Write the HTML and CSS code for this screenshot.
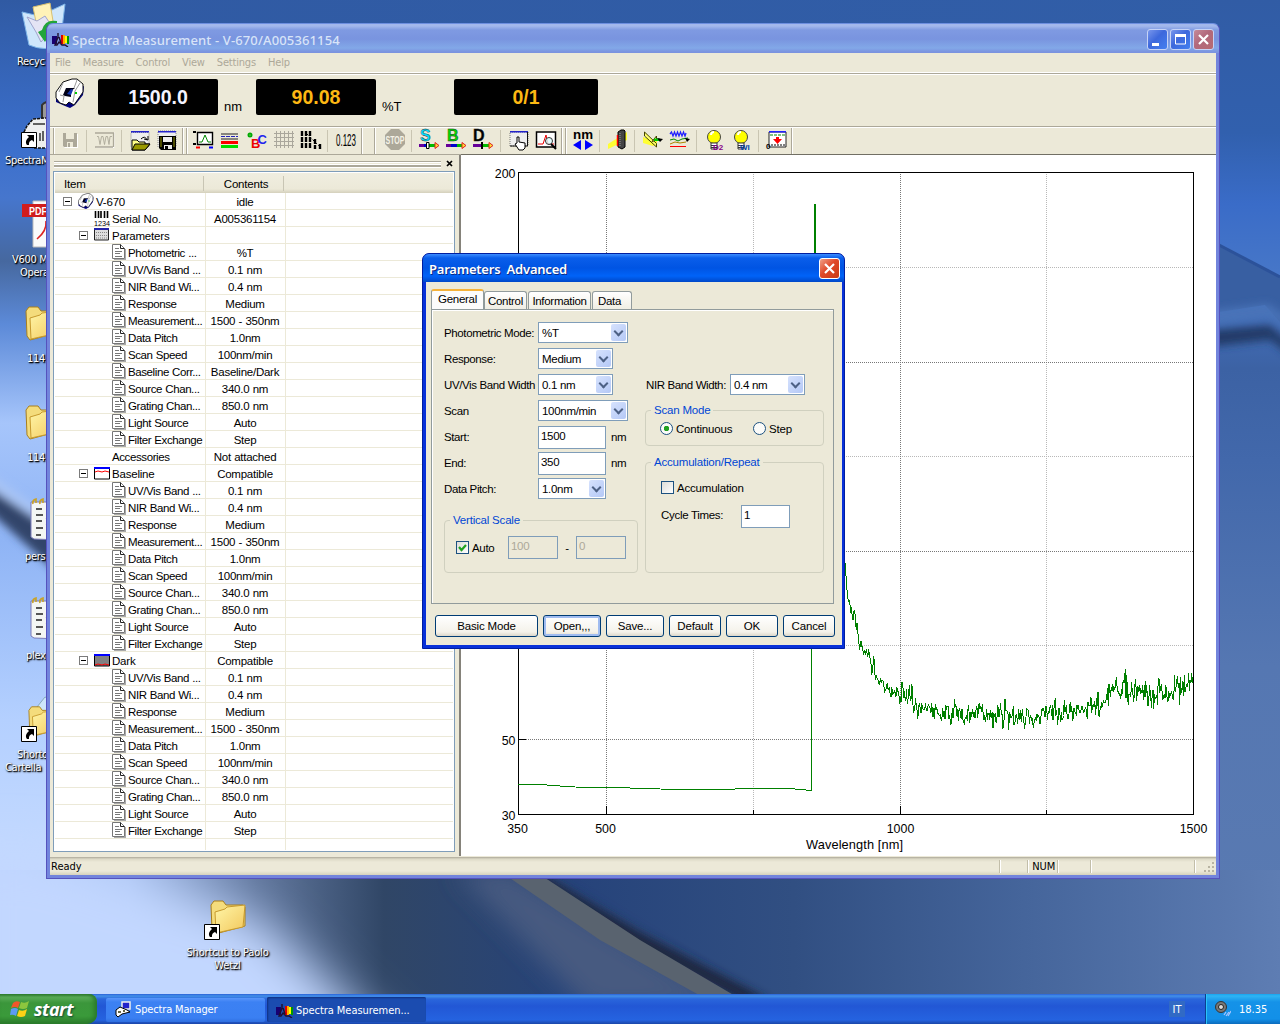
FILE: index.html
```html
<!DOCTYPE html>
<html lang="en">
<head>
<meta charset="utf-8">
<title>Spectra Measurement</title>
<link rel="stylesheet" href="styles.css">
</head>
<body>
<svg width="0" height="0" class="defs">
  <defs>
    <linearGradient id="fold" x1="0" y1="0" x2="1" y2="1"><stop offset="0" stop-color="#fff6a8"/><stop offset="1" stop-color="#f2c75c"/></linearGradient>
    <symbol id="folder" viewBox="0 0 38 36"><path d="M1 5 4 1h9l3 4h17l2 2v19L5 34 2 30Z" fill="#f4dc7c" stroke="#a87f1c"/><path d="M5 12 15 9l2-2 18-2-2 22L6 33Z" fill="url(#fold)" stroke="#c79a2e"/></symbol>
    <symbol id="arrow" viewBox="0 0 16 16"><path d="M.5.5h15v15H.5z" fill="#fff" stroke="#000"/><path d="M6 3h7v7l-2-2c-3 1-3 3-3 5H6c-2-3-1-5 2-8Z" fill="#000"/></symbol>
    <symbol id="note" viewBox="0 0 32 44"><path d="M1 4h30v38L4 41 1 39Z" fill="#f4f6f4" stroke="#7a7ab8"/><path d="M6 11h6M6 17h7M6 23h6M6 30h7M6 37h5M16 11h14M16 20l14 3M16 27l14-2M16 35h14" stroke="#222" stroke-width="1.6"/><path d="M3 6q-1-4 3-5v4M10 6q-1-4 3-5v4M17 6q-1-4 3-5v4M24 6q-1-4 3-5v4" fill="none" stroke="#c9a227" stroke-width="1.6"/></symbol>
    <symbol id="instr" viewBox="0 0 30 30"><path d="M1 18v6l9 4 5 2 5-3 8-10 1-9-9 4Z" fill="#00007c"/><path d="M1 14 8 4l9-3h5l6 5v8l-9 13-5-3-3 3-6-2-4-5Z" fill="#fff" stroke="#111"/><path d="M11 10h9l-4 3v6l-6-1-2-1Z" fill="#000018"/><path d="m12 16 4-5 2 1-2 5Z" fill="#1436b0"/><path d="M8 5 4 14M22 2l-3 8M25 5l-5 8-2 11M5 17l4 1-1 6" fill="none" stroke="#999"/><path d="M20 14h2v2h-2z" fill="#0c0"/></symbol>
    <symbol id="spec" viewBox="0 0 17 14"><path d="M0 3h5v8H0z" fill="#180070"/><path d="M9 2h2v9H9z" fill="#d00"/><path d="M11 2h2v9h-2z" fill="#fa0"/><path d="M13 3h2v7h-2z" fill="#ff0"/><path d="M15 3h2v8h-2z" fill="#090"/><path d="M6 0v4l-3 8h2l2-3 3 3h3l3 2M7 4l2 6" fill="none" stroke="#201030" stroke-width="1.4"/></symbol>
    <symbol id="doc" viewBox="0 0 14 16"><path d="M2 15h11V5h1v11H2z" fill="#aaa"/><path d="M.5.5h8l4 4v10H.5z" fill="#fff" stroke="#777"/><path d="M8.500.5v4h4" fill="none" stroke="#222"/><path d="M3 4.500h4M3 7.500h7M3 9.500h5M3 12.500h7" stroke="#777"/></symbol>
    <symbol id="bulb" viewBox="0 0 22 22"><circle cx="10" cy="8" r="6.500" fill="#ff0" stroke="#444"/><path d="M7 6q0-3 3-3" fill="none" stroke="#fff" stroke-width="2"/><path d="M7 14h6v6H7z" fill="#fff" stroke="#333"/><path d="M7 16.500h6M7 18.500h6" stroke="#333"/></symbol>
  </defs>
</svg>

<main class="desktop">
  <svg class="wallpaper" viewBox="0 0 1280 1024" preserveAspectRatio="none">
    <defs>
      <linearGradient id="wl" x1="0" y1="0" x2="0" y2="1"><stop offset="0" stop-color="#305aa3"/><stop offset=".16" stop-color="#3b6fcc"/><stop offset=".22" stop-color="#4676cd"/><stop offset=".29" stop-color="#46689f"/><stop offset=".36" stop-color="#5c8ad8"/><stop offset=".47" stop-color="#a6c5fb"/><stop offset=".6" stop-color="#8fb4f5"/><stop offset=".8" stop-color="#b4d0ff"/><stop offset="1" stop-color="#c8dcff"/></linearGradient>
      <linearGradient id="wt" x1="0" x2="1"><stop offset="0" stop-color="#305aa3"/><stop offset="1" stop-color="#315ea8"/></linearGradient>
      <linearGradient id="wr" x1="0" y1="0" x2="0" y2="1"><stop offset="0" stop-color="#315ca5"/><stop offset=".13" stop-color="#3160ae"/><stop offset=".2" stop-color="#3a6cc8"/><stop offset=".27" stop-color="#4777c8"/><stop offset=".36" stop-color="#3c62a4"/><stop offset=".45" stop-color="#4268ab"/><stop offset=".65" stop-color="#5577b2"/><stop offset="1" stop-color="#5b7bb1"/></linearGradient>
      <linearGradient id="wb" x1="0" x2="1"><stop offset="0" stop-color="#b9d2ff"/><stop offset=".1" stop-color="#a9c2f0"/><stop offset=".2" stop-color="#63799f"/><stop offset=".3" stop-color="#304666"/><stop offset=".45" stop-color="#26437a"/><stop offset=".62" stop-color="#314f82"/><stop offset=".8" stop-color="#45659b"/><stop offset="1" stop-color="#5e7db3"/></linearGradient>
      <filter id="b4" x="-20%" y="-20%" width="140%" height="140%"><feGaussianBlur stdDeviation="4"/></filter>
      <filter id="b12" x="-30%" y="-30%" width="160%" height="160%"><feGaussianBlur stdDeviation="12"/></filter>
      <filter id="b20" x="-50%" y="-50%" width="200%" height="200%"><feGaussianBlur stdDeviation="24"/></filter>
    </defs>
    <rect width="1280" height="1024" fill="url(#wt)"/>
    <rect width="60" height="900" fill="url(#wl)"/>
    <rect x="1200" width="80" height="1024" fill="url(#wr)"/>
    <path d="M1200 235 1280 277v45l-15-17-65 10Z" fill="#385fa2"/><path d="M1200 235 1280 277" stroke="#2c529a" stroke-width="3"/>
    <g filter="url(#b4)"><path d="M1200 312 1268 304l22 15v10l-22-12-68 8Z" fill="#4a73b8"/><path d="M1200 331l70-6 20 18v12l-20-15-70 8Z" fill="#223a68"/><path d="M-10 480 60 535v40L-10 512Z" fill="#31456b"/><path d="M-10 474 60 523v12L-10 488Z" fill="#a9c5f5"/></g>
    <rect y="870" width="1280" height="154" fill="url(#wb)"/>
    <path d="M-40 850H40L260 920 410 1060H-40Z" fill="#c2d7ff" filter="url(#b20)"/>
    <path d="M455 870 H510 L740 1010 H590Z" fill="#465a80" filter="url(#b12)"/>
    <g filter="url(#b4)"><path d="M536 870 640 932 770 1000H740L630 945 520 870Z" fill="#1c2740"/></g>
    <path d="M498 870H533L640 940 742 1000H708L600 940Z" fill="#59636f"/>
  </svg>

  <div class="shortcut" style="left:17px;top:2px"><svg width="50" height="48" viewBox="0 0 50 48"><path d="M5 10 22 14 48 2 43 43Q28 50 12 43Z" fill="#cfe6fb" stroke="#7fb6e8"/><path d="m16 5 17-4 3 18-16 6Z" fill="#fff2b8" stroke="#d8c070"/><path d="m10 15 10 4 8-5 8 12-12 14-5-10Z" fill="#e4e4f4" stroke="#9fa4cc"/><path d="M25 28q3-11 15-9v8q-8-4-9 3h3l-6 10-7-10Z" fill="#22a53a"/></svg><span class="t1">Recyc</span></div>
  <div class="shortcut" style="left:5px;top:100px"><svg width="60" height="50" viewBox="0 0 60 50"><path d="M37 20V5q3-4 12-4v18" fill="#999" stroke="#333" stroke-width="2"/><path d="M19 32l3-6 6-7 12-1h15v30H28Z" fill="#eee" stroke="#111" stroke-dasharray="3 1" stroke-width="1.500"/><path d="M35 33v8M38 31v10M28 24h12" stroke="#333" stroke-width="1.500"/><use href="#arrow" x="16" y="32" width="16" height="16"/></svg><span class="t2">SpectraM</span></div>
  <div class="shortcut" style="left:12px;top:200px"><svg width="50" height="49" viewBox="0 0 50 49"><path d="M21 1h30v46H21z" fill="#fafafa" stroke="#bbb"/><path d="M10 4h40v13H10z" fill="#d01c1c"/><text x="17" y="14.500" class="pdf" textLength="18" lengthAdjust="spacingAndGlyphs">PDF</text><path d="M25 39q10-8 9-18l4 14" fill="none" stroke="#d22" stroke-width="1.600"/></svg><span>V600 M</span><span class="ind8">Opera</span></div>
  <div class="shortcut" style="left:25px;top:305px"><svg width="38" height="38"><use href="#folder" width="38" height="38"/></svg><span class="t3">114.</span></div>
  <div class="shortcut" style="left:25px;top:404px"><svg width="38" height="38"><use href="#folder" width="38" height="38"/></svg><span class="t3">114.</span></div>
  <div class="shortcut" style="left:25px;top:498px"><svg width="42" height="44" viewBox="-5 0 42 44"><use href="#note" width="32" height="44"/></svg><span class="t4">pers</span></div>
  <div class="shortcut" style="left:26px;top:597px"><svg width="42" height="44" viewBox="-4 0 42 44"><use href="#note" width="32" height="44"/></svg><span class="t4">plex</span></div>
  <div class="shortcut" style="left:5px;top:695px"><svg width="60" height="50" viewBox="0 0 60 50"><path d="m32 12 8-10 14 6v18Z" fill="#cde6fb" stroke="#8ab"/><use href="#folder" x="23" y="10" width="34" height="34"/><use href="#arrow" x="16" y="31" width="16" height="16"/></svg><span class="t5">Shortc</span><span>Cartella</span></div>
  <div class="shortcut centered" style="left:182px;top:898px"><svg width="50" height="44" viewBox="0 0 50 44"><use href="#folder" x="7" y="2" width="38" height="36"/><use href="#arrow" x="1" y="26" width="16" height="16"/></svg><span>Shortcut to Paolo</span><span>Wetzl</span></div>

  <section class="window main-window">
    <header class="titlebar">
      <svg width="17" height="14"><use href="#spec" width="17" height="14"/></svg>
      <h1>Spectra Measurement - V-670/A005361154</h1>
      <div class="wbtns"><i class="wb"><svg width="19" height="19"><path d="M4 13h7v3H4z" fill="#fff"/></svg></i><i class="wb"><svg width="19" height="19"><path d="M4.500 5h10v9h-10z" fill="none" stroke="#fff"/><path d="M4 4h11v3H4z" fill="#fff"/></svg></i><i class="wb red"><svg width="19" height="19"><path d="m5 5 9 9m0-9-9 9" stroke="#fff" stroke-width="2.200"/></svg></i></div>
    </header>
    <div class="client">
      <nav class="menu"><span>File</span><span>Measure</span><span>Control</span><span>View</span><span>Settings</span><span>Help</span></nav>
      <div class="readouts">
        <svg class="inst" width="30" height="30"><use href="#instr" width="30" height="30"/></svg>
        <output class="lcd white">1500.0</output><span class="unit">nm</span>
        <output class="lcd">90.08</output><span class="unit pct">%T</span>
        <output class="lcd wide">0/1</output>
      </div>
      <div class="toolbar">
        <div class="tg ga">
          <svg viewBox="0 0 22 22"><path d="M5 5h14v14H6l-2-2V4z" fill="#fff"/><path d="M4 4h14v14H5l-1-1z" fill="#aca899"/><path d="M7 4h8v6H7zM8 13h6v5H8z" fill="#ece9d8"/><path d="M9 14h2v4H9z" fill="#aca899"/></svg><b></b>
          <svg viewBox="0 0 22 22"><path d="M2 18.500h18v-15" fill="none" stroke="#fff"/><path d="M1 4h19M19.500 4v14M1 18h18" fill="none" stroke="#aca899" stroke-width="1.300"/><path d="M3 7.500h1.500l1.500 8 1.500-8H9l1.500 8 1.500-8h1.500l1.500 8 1-8h2" fill="none" stroke="#aca899" stroke-width=".9"/></svg><b></b>
          <svg viewBox="0 0 22 22"><path d="M2 3.500h18v14H2z" fill="#eee" stroke="#888" stroke-dasharray="1 1"/><path d="M2 2h18v1.500H2z" fill="#22c"/><path d="M3 11h5l2 2h6v2h5l-5 6H3z" fill="#ff8" stroke="#000"/><path d="m6 15h15l-5 6H3Z" fill="#990" stroke="#000"/><path d="M12 10q4-4 6 1M15 10l4 1V7" fill="none" stroke="#000"/></svg>
          <svg viewBox="0 0 22 22"><path d="M2 2h18v16H2z" fill="#eee" stroke="#888" stroke-dasharray="1 1"/><path d="M2 2h18v1.500H2z" fill="#22c"/><path d="M3 7h17v14H5l-2-2z" fill="#000"/><path d="M7 8h9v5H7z" fill="#eee"/><path d="M5 8v10M18 8v10" stroke="#990"/><path d="M8 16h8v4H8z" fill="#eee"/><path d="M9 17h3v3H9z"/></svg>
        </div>
        <div class="tg gb">
          <svg viewBox="0 0 22 22"><path d="M5.500 3.500h15v12h-15z" fill="#fff" stroke="#000" stroke-width="1.400"/><path d="M7 13h3l3-7 3 7h3" fill="none" stroke="#080"/><path d="M1 3h3M1 15h3" stroke="#000" stroke-width="2"/><path d="M4 17.500h4v2H4z" fill="red"/><path d="M17 17.500h4v2h-4z" fill="#00f"/></svg>
          <svg viewBox="0 0 22 22"><path d="M2 5h17M2 10h17" stroke="#222" stroke-width="1.200"/><path d="M2 7.500h17" stroke="#22b" stroke-dasharray="4 1"/><path d="M2 12h17v3H2z" fill="red"/><path d="M2 16h17v3H2z" fill="#0d0"/></svg>
          <svg viewBox="0 0 22 22"><circle cx="4" cy="6" r="1.500" fill="none" stroke="#0a0" stroke-width="2"/><text x="5" y="18.500" class="bc" fill="#e00">B</text><text x="11.500" y="15" class="bc" fill="#22e">C</text></svg>
          <svg viewBox="0 0 22 22"><path d="M1 4.500h20M1 8.500h20M1 12.500h20M1 16.500h20M3.500 2v17M7.500 2v17M11.500 2v17M15.500 2v17M19.500 2v17" stroke="#aaa79c"/></svg>
          <svg viewBox="0 0 22 22"><path d="M2 2v18M6 2v18M10 2v18M15 10v10M20 15v5" stroke="#000" stroke-width="2.400" stroke-dasharray="5 1"/><path d="M7 5 19 17" stroke="#000" stroke-dasharray="2 2"/></svg><b></b>
          <svg viewBox="0 0 22 22"><text x="1" y="17" class="num" textLength="20" lengthAdjust="spacingAndGlyphs">0.123</text></svg>
        </div>
        <div class="tg gc">
          <svg viewBox="0 0 22 22"><path d="M7 0h8l6 6v9l-6 6H7l-6-6V6z" fill="#aca899"/><text x="1.500" y="14.500" class="stop" textLength="19" lengthAdjust="spacingAndGlyphs">STOP</text></svg><b></b>
          <svg viewBox="0 0 22 22"><text x="1" y="12" class="big" fill="#0df">S</text><path d="M0 15h5v3H0z" fill="#609"/><path d="M5 15h5v3H5z" fill="#00c"/><path d="M10 15h6v3h-6z" fill="#0b0"/><path d="m16 13.500 4 3-4 3z" fill="#fd3" stroke="#d22"/><path d="M7.500 13.500h2.500v6H7.500z" fill="#fff" stroke="#000"/></svg>
          <svg viewBox="0 0 22 22"><text x="1" y="12" class="big" fill="#0d0">B</text><path d="M0 15h5v3H0z" fill="#609"/><path d="M5 15h6v3H5z" fill="#00c"/><path d="M11 15h5v3h-5z" fill="#0b0"/><path d="m16 13.500 4 3-4 3z" fill="#fd3" stroke="#d22"/></svg>
          <svg viewBox="0 0 22 22"><text x="0" y="12" class="big" fill="#000">D</text><path d="M0 15h8v3H0z" fill="#609"/><path d="M9 15h7v3H9z" fill="#0b0"/><path d="m16 13.500 4 3-4 3z" fill="#fd3" stroke="#d22"/><path d="M8 13h2v7H8z" fill="#000"/></svg><b></b>
          <svg viewBox="0 0 22 22"><path d="M2 3h18v14H2z" fill="#eee" stroke="#777" stroke-dasharray="1 1"/><path d="M2 2h18v1.500H2z" fill="#22c"/><path d="M2 17h17.500V3" fill="none" stroke="#111"/><path d="M9 8h2v5l6 1v5l-2 2h-4l-4-6 2-1z" fill="#fff" stroke="#000"/></svg>
          <svg viewBox="0 0 22 22"><path d="M1.500 3h19v15h-19z" fill="#fff" stroke="#000" stroke-width="1.500"/><path d="M3 15h5l3-9 2 9h6" fill="none" stroke="#e00"/><circle cx="14" cy="12" r="3.500" fill="#dffc" stroke="#333"/><path d="m16 15 5 5" stroke="#000" stroke-width="2"/></svg>
        </div>
        <div class="tg gd">
          <svg viewBox="0 0 22 22"><text x="1" y="9.500" class="nm" textLength="20" lengthAdjust="spacingAndGlyphs">nm</text><path d="m1 16 8-5v10zM21 16l-8-5v10z" fill="#00f"/></svg><b></b>
          <svg viewBox="0 0 22 22"><path d="M1 15 20 3v8L1 20z" fill="#ff3"/><path d="M11 3l3-2h3l1 1v16l-3 2-4-2Z" fill="#444" stroke="#000"/><path d="M10.500 6v11" stroke="red" stroke-width="1.500"/><path d="M13 4v14" stroke="#999" stroke-dasharray="1 1"/></svg><b></b>
          <svg viewBox="0 0 22 22"><path d="M1 8l8 3 6 0v3l-4 3-10-3Z" fill="#ff3"/><path d="M2.500 3v4l12 11v-3.500Z" fill="#ff6" stroke="#440"/><path d="M14.500 7v4L10 12.500Z" fill="#ff6" stroke="#440"/><path d="M12 9.500h6v2.500h-6z" fill="#0c0"/><path d="m15 9 6 1-3 3Z"/></svg>
          <svg viewBox="0 0 22 22"><path d="m1 5 1.500-2L4 7l1.500-4L7 7l1.500-4L10 7l1.500-4L13 7l1.500-4L16 7l1-3" fill="none" stroke="#22f" stroke-width="1.300"/><path d="m1 11 4-1 4 2 4-2 6-1" fill="none" stroke="#080"/><path d="m1 15 5-2 5 1 6-1" fill="none" stroke="#a80"/><path d="M1 17.500h16" stroke="red"/><path d="m16 9 5 1-3 3Z"/></svg><b></b>
          <svg viewBox="0 0 22 22"><use href="#bulb" width="22" height="22"/><text x="9" y="20.500" class="tiny" fill="#808">D2</text></svg>
          <svg viewBox="0 0 22 22"><use href="#bulb" width="22" height="22"/><text x="9" y="20.500" class="tiny" fill="#04a">WI</text></svg><b></b>
          <svg viewBox="0 0 22 22"><path d="M3 3h17v15H3z" fill="#fff" stroke="#222"/><path d="M3 2h17v1.500H3z" fill="#22f"/><path d="M4 6h15" stroke="#080" stroke-dasharray="3 1"/><path d="M10 8h3v2h3l-4.500 5L7 10h3z" fill="#f00"/><path d="M5 16h14" stroke="#000" stroke-dasharray="2 1"/><text x="0" y="20" class="tiny">0</text></svg>
        </div>
      </div>
      <div class="work">
        <aside class="panel">
          <div class="gripper"><i></i><svg width="7" height="7"><path d="m1 1 5 5m0-5-5 5" stroke="#000" stroke-width="1.700"/></svg></div>
          <div class="list">
            <div class="lhead"><span>Item</span><span>Contents</span><span></span></div>
            <div class="rows" id="rows"></div>
          </div>
        </aside>
        <div class="chart">
          <svg width="754" height="699" viewBox="461 156 754 699" shape-rendering="crispEdges">
            <g stroke="#b8b8b8" stroke-dasharray="1 1"><path d="M753.500 172V814M1046.500 172V814M518 267.500H1193M518 456.500H1193M518 645.500H1193"/></g>
            <g stroke="#777" stroke-dasharray="1 1"><path d="M606.500 172V814M900.500 172V814M518 362.500H1193M518 551.500H1193M518 739.500H1193"/></g>
            <path d="M606.500 806v8M900.500 806v8M753.500 810v4M1046.500 810v4M519 739.500h7" stroke="#000"/>
            <path d="M518.500 172.500H1193.500V814.500H518.500Z" fill="none" stroke="#000"/>
            <path id="trace" fill="none" stroke="#008000"/>
            <path d="M815 204V560" stroke="#008000" stroke-width="2"/>
            <g class="axis"><text x="515.500" y="178" text-anchor="end">200</text><text x="515.500" y="745" text-anchor="end">50</text><text x="515.500" y="820" text-anchor="end">30</text><text x="517.500" y="832.500" text-anchor="middle">350</text><text x="605.500" y="832.500" text-anchor="middle">500</text><text x="900.500" y="832.500" text-anchor="middle">1000</text><text x="1193.500" y="832.500" text-anchor="middle">1500</text><text x="806" y="849" textLength="97" class="xt">Wavelength [nm]</text></g>
          </svg>
        </div>
      </div>
      <footer class="status"><span class="ready">Ready</span><span class="s1"></span><span class="s2">NUM</span><span class="s3"></span><span class="s4"></span><svg width="12" height="12"><path d="M8 0h2v2H8zM4 4h2v2H4zM8 4h2v2H8zM0 8h2v2H0zM4 8h2v2H4zM8 8h2v2H8z" fill="#b8b4a2"/></svg></footer>
    </div>
  </section>

  <section class="window dialog">
    <header class="dtitle"><h2>Parameters&nbsp; Advanced</h2><i class="wb close"><svg width="19" height="19"><path d="m5 5 9 9m0-9-9 9" stroke="#fff" stroke-width="2.200"/></svg></i></header>
    <div class="dbody">
      <div class="tabs"><span class="tab on">General</span><span class="tab w43">Control</span><span class="tab w63">Information</span><span class="tab w39">Data</span></div>
      <div class="page">
        <div class="col left">
          <div class="row"><label>Photometric Mode:</label><span class="combo w90">%T<i></i></span></div>
          <div class="row"><label>Response:</label><span class="combo w75">Medium<i></i></span></div>
          <div class="row"><label>UV/Vis Band Width</label><span class="combo w75">0.1 nm<i></i></span></div>
          <div class="row"><label>Scan</label><span class="combo w90">100nm/min<i></i></span></div>
          <div class="row"><label>Start:</label><span class="edit w68">1500</span><em>nm</em></div>
          <div class="row"><label>End:</label><span class="edit w68">350</span><em>nm</em></div>
          <div class="row"><label>Data Pitch:</label><span class="combo w68">1.0nm<i></i></span></div>
          <fieldset class="vscale"><legend>Vertical Scale</legend><div class="vrow"><span class="check"><svg width="11" height="11"><path d="m2 5 2.500 3L9 3" fill="none" stroke="#21a121" stroke-width="2.200"/></svg></span><span class="auto">Auto</span><span class="edit dis">100</span><span class="dash">-</span><span class="edit dis">0</span></div></fieldset>
        </div>
        <div class="col right">
          <div class="row nir"><label>NIR Band Width:</label><span class="combo w75">0.4 nm<i></i></span></div>
          <fieldset class="mode"><legend>Scan Mode</legend><div class="radios"><span class="radio sel"></span><span class="rc">Continuous</span><span class="radio"></span><span>Step</span></div></fieldset>
          <fieldset class="accum"><legend>Accumulation/Repeat</legend><div class="arow"><span class="check"></span><span>Accumulation</span></div><div class="crow"><span class="cl">Cycle Times:</span><span class="edit w48">1</span></div></fieldset>
        </div>
      </div>
      <div class="buttons"><span class="btn b103">Basic Mode</span><span class="btn b58 def">Open,,,</span><span class="btn b58">Save...</span><span class="btn">Default</span><span class="btn">OK</span><span class="btn">Cancel</span></div>
    </div>
  </section>

  <footer class="taskbar">
    <div class="start"><svg width="20" height="20" viewBox="0 0 20 20"><path d="M3 4q3-3 7-1L8 9Q5 7 1 9z" fill="#f0562b"/><path d="M11 3q4 2 8-1l-2 7q-4 2-8 0z" fill="#8cc63e"/><path d="M1 10q4-2 7 0l-2 7q-3-2-6-1z" fill="#5b9bf5"/><path d="M9 11q4 2 8-1l-2 7q-4 2-8 0z" fill="#fcd116"/></svg><span>start</span></div>
    <div class="task"><svg width="17" height="17" viewBox="0 0 17 17"><path d="M7 1h8v7H7z" fill="#22c" stroke="#eee" stroke-width="1.500"/><path d="M1 14V9l4-3 7 3 3 2-8 2-4 3Z" fill="#fff" stroke="#000"/><path d="M3 10h3v2H3zM8 9h2v2H8z" fill="#664"/></svg><span>Spectra Manager</span></div>
    <div class="task active"><svg width="17" height="14"><use href="#spec" width="17" height="14"/></svg><span>Spectra Measuremen...</span></div>
    <span class="lang">IT</span>
    <div class="tray"><svg width="16" height="16" viewBox="0 0 16 16"><circle cx="6" cy="6" r="5.500" fill="#777" stroke="#333"/><circle cx="6" cy="6" r="2.500" fill="#ddd" stroke="#222"/><path d="m9 14 2-3m0 4 3-4m-1 4 3-5" stroke="#a9c6ff" stroke-width="1.200"/></svg><span>18.35</span></div>
  </footer>
</main>
<script src="script.js"></script>
</body>
</html>
```
FILE: styles.css
```css
* { box-sizing: border-box; }
body { margin: 0; overflow: hidden; font: 11.5px "Liberation Sans", Arial, sans-serif; color: #000; }
i, em { font-style: normal; }
.defs { position: absolute; }
.desktop { position: relative; width: 1280px; height: 1024px; overflow: hidden; }
.wallpaper { position: absolute; inset: 0; width: 1280px; height: 1024px; }

.shortcut { position: absolute; display: flex; flex-direction: column; font: 11px/13px "DejaVu Sans Condensed", "DejaVu Sans", sans-serif; letter-spacing: -.3px; color: #fff; text-shadow: 1px 1px 1px #000, 1px 1px 2px #000; white-space: nowrap; }
.shortcut.centered { width: 91px; align-items: center; letter-spacing: -.15px; }
.shortcut.centered svg { margin-bottom: 4px; }
.t1 { margin-top: 5px; }
.t2 { margin-top: 4px; }
.shortcut .ind8 { margin-left: 8px; }
.shortcut:nth-of-type(3) svg { margin-bottom: 4px; }
.t3 { margin-top: 9px; margin-left: 2px; }
.t4 { margin-top: 8px; }
.t5 { margin-top: 3px; margin-left: 12px; }
.pdf { font: bold 10px "Liberation Sans", sans-serif; fill: #fff; text-shadow: none; letter-spacing: 0; }

.window { position: absolute; display: flex; flex-direction: column; }
.main-window { left: 46px; top: 23px; width: 1174px; height: 856px; border-radius: 7px 7px 0 0; background: #7284dc; border: 1px solid #5552bd; border-top-color: #6d8fe0; padding: 0 3px 3px; }
.titlebar { display: flex; align-items: center; height: 29px; margin: 0 -3px; padding: 3px 5px 0 5px; background: linear-gradient(#a3b8ec 0 2px, #7f9ae2 6px, #7994df 15px, #82a8e8 24px, #7b93df 28px); border-radius: 6px 6px 0 0; }
.titlebar h1 { margin: 0 auto 0 3px; font: 500 13px "Noto Sans", sans-serif; letter-spacing: .13px; color: #d8e4f8; width: 272px; white-space: nowrap; }
.wbtns { display: flex; gap: 2px; margin-top: -2px; }
.wb { width: 21px; height: 21px; border: 1px solid #c6d3f6; border-radius: 3px; background: linear-gradient(135deg, #7896ec, #3d68dc 45%, #4480f0); }
.wb svg { display: block; }
.wb.red { background: linear-gradient(135deg, #c58a98, #b2697c 45%, #b76a72); }
.client { flex: 1; display: flex; flex-direction: column; background: #ece9d8; min-height: 0; }
.menu { height: 19px; display: flex; gap: 12px; padding: 2px 0 0 5px; font: 11px/15px "DejaVu Sans Condensed", sans-serif; letter-spacing: -.18px; color: #aca899; }
.readouts { height: 54px; border-top: 1px solid #fff; box-shadow: inset 0 1px #aca899, inset 0 2px #fff; display: flex; align-items: flex-start; padding: 6px 0 0 5px; }
.inst { margin-right: 13px; margin-top: -1px; }
.lcd { width: 120px; height: 36px; border-radius: 2px; background: #000; color: #fdb813; font: bold 19.5px/36px "Liberation Sans", sans-serif; text-align: center; }
.lcd.white { color: #f4f4ff; }
.lcd.wide { width: 144px; }
.unit { width: 38px; padding: 20px 0 0 6px; font-size: 13px; line-height: 16px; }
.unit.pct { width: 78px; }
.toolbar { height: 29px; border-top: 1px solid #aca899; box-shadow: inset 0 1px #fff; border-bottom: 1px solid #aca899; display: flex; padding: 1px 0 0 3px; }
.tg { display: flex; align-items: flex-start; padding-top: 1px; gap: 5px; height: 26px; padding-left: 6px; border-left: 1px solid #aca899; border-right: 1px solid #aca899; box-shadow: inset 1px 0 #fff, 1px 0 #fff; }
.tg svg { width: 22px; height: 22px; flex: none; overflow: visible; }
.tg b { width: 3px; height: 22px; margin-top: 1px; border-left: 1px solid #c9c5b2; flex: none; }
.ga { width: 130px; margin-right: 3px; padding-left: 5px; }
.gb { width: 176px; margin-right: 12px; padding-left: 5px; }
.gc { width: 188px; margin-right: 3px; padding-left: 9px; }
.gd { width: 227px; padding-left: 6px; }
.bc { font: bold 13px "Liberation Sans", sans-serif; }
.num { font: 16px "Liberation Sans", sans-serif; }
.stop { font: bold 10px "Liberation Sans", sans-serif; fill: #f4f2e6; }
.big { font: bold 16px "Liberation Sans", sans-serif; stroke: #222; stroke-width: .4px; }
.nm { font: bold 13px "Liberation Sans", sans-serif; }
.tiny { font: bold 8px "Liberation Sans", sans-serif; }

.work { display: flex; height: 702px; background: #fff; border-bottom: 1px solid #ece9d8; }
.panel { width: 411px; background: #ece9d8; border-right: 2px solid #85827a; padding: 4px 4px 3px 3px; }
.gripper { display: flex; align-items: center; justify-content: space-between; height: 12px; padding-left: 1px; }
.gripper i { width: 387px; height: 6px; margin-top: -2px; border: 1px solid #aca899; border-width: 1px 0; box-shadow: inset 0 1px #fff, 0 1px #fff; background: linear-gradient(#ece9d8 2px, #fff 2px 3px, #aca899 3px); background-size: 100% 4px; }
.gripper svg { margin: -4px 2px 0 0; }
.list { width: 402px; height: 681px; background: #fff; border: 1px solid #7f9db9; padding: 1px; display: flex; flex-direction: column; overflow: hidden; }
.lhead { flex: none; display: grid; grid-template-columns: 149px 80px 1fr; height: 20px; align-items: center; background: linear-gradient(#f0eee0, #ece9d8 16px, #d4d0bc); line-height: 16px; }
.lhead span { padding-left: 9px; letter-spacing: -.2px; height: 15px; border-right: 1px solid #c8c5b4; }
.lhead span:nth-child(2) { text-align: center; padding-left: 5px; }
.lhead span:last-child { border: 0; }
.rows { flex: 1; display: flex; flex-direction: column; background: linear-gradient(90deg, transparent 150px, #ece9d8 150px 151px, transparent 151px 230px, #ece9d8 230px 231px, transparent 231px); letter-spacing: -.4px; word-spacing: .4px; }
.trow { flex: none; display: grid; grid-template-columns: 150px 80px 1fr; height: 17px; border-bottom: 1px solid #ece9d8; line-height: 16px; white-space: nowrap; }
.tname { display: flex; align-items: center; height: 16px; }
.tname span { padding-top: 2px; }
.tname svg { flex: none; }
.tname .box { width: 9px; height: 9px; border: 1px solid #7b7b7b; margin-right: 6px; background: linear-gradient(#000, #000) center/5px 1px no-repeat; flex: none; }
.l0 { padding-left: 8px; letter-spacing: -.2px; } .l0 svg { margin-right: 2px; }
.l1 { padding-left: 24px; letter-spacing: -.2px; } .l1.nobox { padding-left: 39px; }
.l1 svg { margin-right: 2px; }
.l2 { padding-left: 57px; } .l2 svg { margin-right: 2px; }
.l3 { padding-left: 57px; }
.tval { text-align: center; padding-top: 1px; letter-spacing: -.25px; }
.axis { font: 12.4px "Liberation Sans", sans-serif; shape-rendering: auto; }
.xt { font-size: 12.8px; }
.chart { flex: 1; padding: 1px 0 0 0; border-top: 1px solid #716f64; margin-top: -1px; }
.chart svg { display: block; }
.status { flex: 1; display: flex; align-items: center; font: 11px "DejaVu Sans Condensed", sans-serif; background: linear-gradient(#aca899, #dcd9c6 2px, #ece9d8 5px, #ece9d8 14px, #d6d2bd); padding: 1px 0 0 1px; }
.status span { height: 13px; line-height: 13px; border-right: 1px solid #c2bea9; box-shadow: 1px 0 #fff; }
.status .ready { width: 950px; }
.s1 { width: 28px; } .s2 { width: 30px; padding-left: 4px; } .s3 { width: 33px; } .s4 { width: 104px; }
.status svg { margin: 3px 0 0 9px; }

.dialog { left: 422px; top: 253px; width: 423px; height: 396px; border-radius: 7px 7px 0 0; background: #0831d9; border: 1px solid #001ea0; padding: 0 2px 3px 3px; }
.dtitle { height: 28px; margin: 0 -2px 0 -3px; padding: 1px 4px 0 6px; display: flex; align-items: center; justify-content: space-between; border-radius: 6px 6px 0 0; background: linear-gradient(#3c8cff 0, #0a5eea 4px, #0054e3 14px, #0063f8 22px, #0048c8); }
.dtitle h2 { margin: 0; font: 600 13px "Noto Sans", sans-serif; letter-spacing: -.23px; color: #fff; text-shadow: 1px 1px #0b2a86; width: 145px; white-space: nowrap; }
.wb.close { border-color: #fff; background: linear-gradient(135deg, #f0a088, #e0492a 45%, #c83a14); }
.dbody { flex: 1; background: #ece9d8; padding: 7px 9px 0 5px; letter-spacing: -.3px; display: flex; flex-direction: column; }
.tabs { display: flex; align-items: flex-end; height: 20px; gap: 1px; }
.tab { height: 18px; border: 1px solid #919b9c; border-bottom: 0; border-radius: 3px 3px 0 0; background: linear-gradient(#fff, #f0eee4); line-height: 19px; text-align: center; }
.tab.on { width: 53px; height: 20px; background: #fcfcfb; border-top: 2px solid #f5b23a; line-height: 17px; margin-right: -1px; }
.w43 { width: 43px; } .w63 { width: 63px; } .w39 { width: 40px; }
.tab.w39 { text-align: left; padding-left: 5px; }
.page { width: 403px; height: 295px; border: 1px solid #919b9c; box-shadow: inset 1px 1px #fff; display: flex; padding: 9px 0 0 12px; }
.col.left { width: 201px; }
.row { display: flex; height: 26px; padding-top: 3px; line-height: 21px; }
.row label { width: 94px; flex: none; white-space: nowrap; line-height: 22px; letter-spacing: -.38px; }
.row em { margin-left: 5px; line-height: 22px; }
.combo { height: 21px; border: 1px solid #7f9db9; background: #fff; padding: 0 1px 0 3px; line-height: 20px; display: flex; align-items: center; justify-content: space-between; }
.combo i { width: 15px; height: 17px; border-radius: 2px; background: linear-gradient(135deg, #d6e2fd, #b4c8f6); display: grid; place-items: center; }
.combo i::after { content: ""; width: 5px; height: 5px; border: solid #4d6185; border-width: 0 2px 2px 0; transform: translateY(-1px) rotate(45deg); }
.edit { height: 23px; border: 1px solid #7f9db9; background: #fff; padding-left: 2px; line-height: 19px; }
.w90 { width: 90px; } .w75 { width: 75px; } .w68 { width: 68px; } .w48 { width: 49px; }
fieldset { margin: 0; border: 1px solid #d0d0bf; border-radius: 4px; padding: 0; min-width: 0; }
legend { margin-left: 5px; padding: 0 3px; line-height: 14px; color: #0046d5; letter-spacing: -.2px; }
.vscale { width: 194px; height: 60px; margin-top: 12px; }
.vrow { display: flex; align-items: center; padding: 9px 0 0 11px; }
.check { width: 13px; height: 13px; border: 1px solid #1c5180; background: linear-gradient(135deg, #dcdcd7, #fff); margin-right: 3px; flex: none; }
.check svg { display: block; }
.auto { width: 36px; }
.dis { width: 50px; background: #ece9d8; color: #aca899; }
.dash { width: 18px; text-align: center; }
.col.right { padding-top: 52px; }
.nir label { width: 85px; line-height: 23px; padding-left: 1px; }
.mode { width: 179px; height: 43px; margin-top: 6px; }
.radios { display: flex; align-items: center; padding: 3px 0 0 14px; height: 20px; letter-spacing: -.2px; }
.radio { width: 13px; height: 13px; border: 1px solid #1c5180; border-radius: 50%; background: #fbfbf9; margin-right: 3px; }
.radio.sel { background: radial-gradient(circle, #21a121 0 2.5px, #fbfbf9 3px); }
.rc { width: 77px; }
.accum { width: 179px; height: 118px; margin-top: 9px; }
.arow { display: flex; padding: 12px 0 0 15px; line-height: 14px; height: 26px; letter-spacing: -.2px; }
.crow { display: flex; padding: 10px 0 0 15px; line-height: 20px; }
.cl { width: 80px; }
.buttons { display: flex; gap: 5px; margin: 11px 0 0 4px; }
.btn { flex: none; width: 52px; height: 22px; border: 1px solid #003c74; border-radius: 3px; background: linear-gradient(#fff, #f4f2ea 80%, #dcd7ca); text-align: center; line-height: 20px; letter-spacing: -.15px; }
.btn.b103 { width: 103px; } .btn.b58 { width: 58px; }
.def { box-shadow: inset 0 0 0 2px #a0bcf0; }

.taskbar { position: absolute; left: 0; top: 994px; width: 1280px; height: 30px; display: flex; align-items: center; background: linear-gradient(#2a62d8, #4390e8 2px, #2a66dc 5px, #2257d5 12px, #2563e0 26px, #1b46a8); font: 11px "DejaVu Sans Condensed", sans-serif; color: #fff; }
.start { width: 97px; height: 30px; border-radius: 0 8px 10px 0; background: linear-gradient(#2f7a30, #5aac58 3px, #3b963b 9px, #3a9a3a 22px, #2a7a2b); display: flex; align-items: center; padding-left: 10px; gap: 4px; font: italic bold 18px "Open Sans", sans-serif; text-shadow: 1px 1px 2px #143; box-shadow: inset -3px 0 4px #2a7a2b; margin-right: 9px; }
.start span { letter-spacing: -.5px; }
.task { width: 159px; height: 24px; margin-top: 1px; border-radius: 2px; background: linear-gradient(#5a96fb, #3c81f3 4px, #3a7ff2 20px, #2f6fe0); display: flex; align-items: center; gap: 3px; padding-left: 9px; margin-right: 2px; letter-spacing: -.15px; }
.task.active { background: #1b4cb0; box-shadow: inset 1px 1px 2px #0f2f80; width: 159px; height: 25px; padding-top: 2px; letter-spacing: -.05px; }
.lang { margin-left: auto; width: 16px; height: 16px; background: #316ac5; text-align: center; line-height: 17px; margin-right: 20px; }
.tray { width: 75px; height: 30px; border-left: 1px solid #0a3f90; box-shadow: inset 1px 0 #2bc4fa; background: linear-gradient(#18a4ee, #2fb4f4 2px, #1592e8 8px, #1290e8 25px, #0b6bbd); display: flex; align-items: center; gap: 8px; padding-left: 9px; }
```
FILE: script.js
```js
const ICONS = {
  unit: '<svg width="16" height="16"><use href="#instr" width="16" height="16"/></svg>',
  serial: '<svg width="16" height="16" overflow="visible"><path d="M1.500 1v7M4.500 1v7M7 1v7M10.500 1v7M13.500 1v7" stroke="#000" stroke-width="1.600"/><text x="0" y="15.500" font-size="8" textLength="16" lengthAdjust="spacingAndGlyphs" letter-spacing="0">1234</text></svg>',
  params: '<svg width="16" height="14"><path d="M.5 1h14v11H.5z" fill="#ddd" stroke="#222"/><path d="M2 4.500h12M2 7.500h12M2 10h12" stroke="#888" stroke-dasharray="1 1"/><path d="M0 0h15v2H0z" fill="#22a"/></svg>',
  base: '<svg width="16" height="13"><path d="M.5 1h15v11H.5z" fill="#fff" stroke="#000"/><path d="M0 0h16v2H0z" fill="#00f"/><path d="m1 5 3-1 4 1 3-1 4 1" fill="none" stroke="red"/></svg>',
  dark: '<svg width="16" height="13"><path d="M.5 1h15v11H.5z" fill="#808080" stroke="#000"/><path d="M0 0h16v2H0z" fill="#00f"/><path d="m1 11 3-1 4 1 3-1 4 1" fill="none" stroke="red"/></svg>',
  doc: '<svg width="14" height="16"><use href="#doc" width="14" height="16"/></svg>'
};

const common = [
  ['UV/Vis Band ...', '0.1 nm'], ['NIR Band Wi...', '0.4 nm'], ['Response', 'Medium'],
  ['Measurement...', '1500 - 350nm'], ['Data Pitch', '1.0nm'], ['Scan Speed', '100nm/min']
];
const tail = [['Source Chan...', '340.0 nm'], ['Grating Chan...', '850.0 nm'], ['Light Source', 'Auto'], ['Filter Exchange', 'Step']];
const leaf = ([name, value]) => [2, 'doc', name, value];

const rows = [
  [0, 'unit', 'V-670', 'idle'],
  [1, 'serial', 'Serial No.', 'A005361154', 'nobox'],
  [1, 'params', 'Parameters', ''],
  ...[['Photometric ...', '%T'], ...common, ['Baseline Corr...', 'Baseline/Dark'], ...tail].map(leaf),
  [3, '', 'Accessories', 'Not attached'],
  [1, 'base', 'Baseline', 'Compatible'],
  ...[...common, ...tail].map(leaf),
  [1, 'dark', 'Dark', 'Compatible'],
  ...[...common, ...tail].map(leaf)
];

document.getElementById('rows').innerHTML = rows.map(([level, icon, name, value, extra]) => {
  const box = level < 2 && !extra ? '<i class="box"></i>' : '';
  return `<div class="trow"><span class="tname l${level} ${extra || ''}">${box}${ICONS[icon] || ''}<span>${name}</span></span><span class="tval">${value}</span></div>`;
}).join('');

/* Spectrum: baseline points [x, y, noise amplitude] joined with repeatable noise. */
let seed = 7;
const rand = () => (seed = (seed * 16807) % 2147483647) / 2147483647;
const flat = [[518, 784.5], [540, 784.5], [560, 786], [575, 787], [615, 787.5], [660, 789], [715, 790], [745, 788.5], [790, 788.5], [806, 790], [811, 790.5]];
const curve = [[845, 563, 1], [847, 592, 6], [850, 605, 8], [854, 612, 10], [857, 628, 8], [859, 645, 7], [864, 648, 10], [868, 655, 8], [873, 668, 8], [877, 680, 11], [885, 684, 6], [893, 692, 7], [905, 696, 9], [918, 703, 12], [930, 710, 8], [950, 714, 9], [990, 713, 11], [1025, 718, 13], [1050, 714, 9], [1065, 713, 13], [1085, 710, 7], [1095, 704, 8], [1106, 702, 12], [1114, 684, 12], [1130, 690, 15], [1150, 693, 13], [1170, 691, 16], [1193, 684, 17]];
let d = 'M' + flat.map(p => p.join(' ')).join('L') + 'V560M845 563';
for (let i = 1; i < curve.length; i++) {
  const [x0, y0] = curve[i - 1], [x1, y1, amp] = curve[i];
  for (let x = x0 + .75; x <= x1; x += .75) {
    const spread = (rand() + rand() + rand() - 1.5) * 1.1;
    d += `L${x} ${(y0 + (y1 - y0) * (x - x0) / (x1 - x0) + spread * amp).toFixed(1)}`;
  }
}
document.getElementById('trace').setAttribute('d', d);
```
